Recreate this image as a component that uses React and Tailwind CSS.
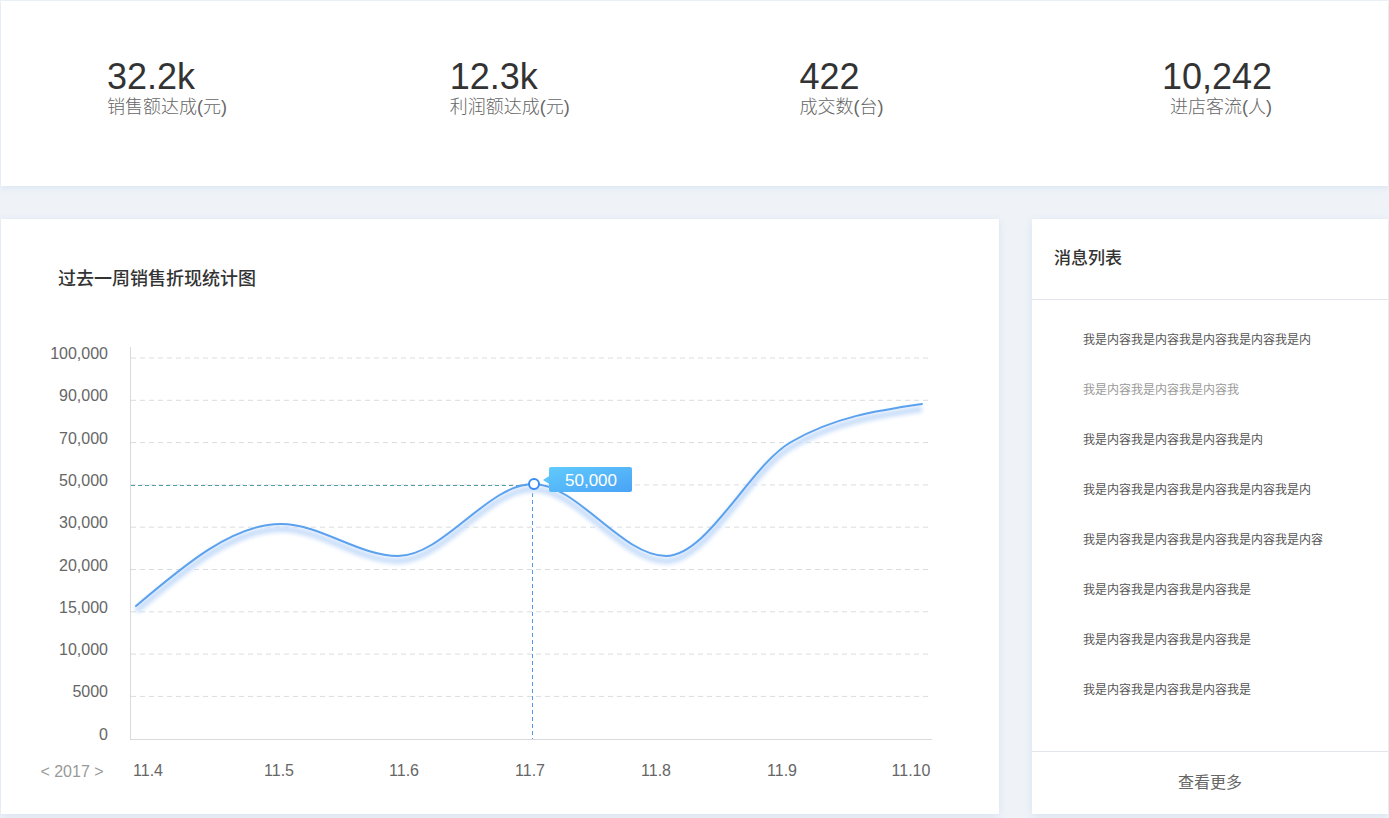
const stats = [
  { value: '32.2k', label: '销售额达成(元)', cls: 'pl-[106px]' },
  { value: '12.3k', label: '利润额达成(元)', cls: 'pl-[102px]' },
  { value: '422', label: '成交数(台)', cls: 'pl-[105px]' },
  { value: '10,242', label: '进店客流(人)', cls: 'pr-[116px] text-right items-end' },
];

const yLabels = ['100,000', '90,000', '70,000', '50,000', '30,000', '20,000', '15,000', '10,000', '5000', '0'];
const xLabels = [
  { t: '11.4', x: 147 },
  { t: '11.5', x: 278 },
  { t: '11.6', x: 403 },
  { t: '11.7', x: 529 },
  { t: '11.8', x: 655 },
  { t: '11.9', x: 781 },
  { t: '11.10', x: 910 },
];

const points = [
  [135, 306],
  [280, 224],
  [397, 256],
  [532, 184],
  [665, 256],
  [790, 142],
  [921, 104],
];

const messages = [
  { t: '我是内容我是内容我是内容我是内容我是内', muted: false },
  { t: '我是内容我是内容我是内容我', muted: true },
  { t: '我是内容我是内容我是内容我是内', muted: false },
  { t: '我是内容我是内容我是内容我是内容我是内', muted: false },
  { t: '我是内容我是内容我是内容我是内容我是内容', muted: false },
  { t: '我是内容我是内容我是内容我是', muted: false },
  { t: '我是内容我是内容我是内容我是', muted: false },
  { t: '我是内容我是内容我是内容我是', muted: false },
];

// monotone-x smoothing, same idea as d3.curveMonotoneX
function monotonePath(pts) {
  const n = pts.length;
  const sign = (v) => (v < 0 ? -1 : 1);
  const m = new Array(n).fill(0);
  for (let i = 1; i < n - 1; i++) {
    const h0 = pts[i][0] - pts[i - 1][0];
    const h1 = pts[i + 1][0] - pts[i][0];
    const s0 = (pts[i][1] - pts[i - 1][1]) / h0;
    const s1 = (pts[i + 1][1] - pts[i][1]) / h1;
    const p = (s0 * h1 + s1 * h0) / (h0 + h1);
    m[i] = (sign(s0) + sign(s1)) * Math.min(Math.abs(s0), Math.abs(s1), 0.5 * Math.abs(p)) || 0;
  }
  const h = pts[1][0] - pts[0][0];
  m[0] = (3 * (pts[1][1] - pts[0][1]) / h - m[1]) / 2;
  const hl = pts[n - 1][0] - pts[n - 2][0];
  m[n - 1] = (3 * (pts[n - 1][1] - pts[n - 2][1]) / hl - m[n - 2]) / 2;
  let d = `M${pts[0][0]},${pts[0][1]}`;
  for (let i = 0; i < n - 1; i++) {
    const [x0, y0] = pts[i];
    const [x1, y1] = pts[i + 1];
    const dx = (x1 - x0) / 3;
    d += ` C${x0 + dx},${y0 + dx * m[i]} ${x1 - dx},${y1 - dx * m[i + 1]} ${x1},${y1}`;
  }
  return d;
}

function SalesChart() {
  const linePath = monotonePath(points);
  return (
    <svg width="998" height="514" viewBox="0 0 998 514" className="block">
      <defs>
        <filter id="glow" x="-10%" y="-30%" width="120%" height="160%">
          <feGaussianBlur stdDeviation="2.2" />
        </filter>
        <linearGradient id="tip" x1="0" y1="0" x2="1" y2="1">
          <stop offset="0" stopColor="#60cafc" />
          <stop offset="1" stopColor="#4aa3f6" />
        </linearGradient>
      </defs>

      {yLabels.map((label, i) => {
        const y = 58 + i * 42.3;
        return (
          <g key={label}>
            {i < yLabels.length - 1 && (
              <line x1="130" x2="929" y1={y} y2={y} stroke="#d9dcdf" strokeWidth="1" strokeDasharray="5 4" />
            )}
            <text x="107" y={y - 4.5} textAnchor="end" dominantBaseline="central" fontSize="16" fill="#666">
              {label}
            </text>
          </g>
        );
      })}

      <line x1="129.5" x2="129.5" y1="47" y2="439" stroke="#d8dadd" strokeWidth="1" />
      <line x1="129" x2="931" y1="439.5" y2="439.5" stroke="#d8dadd" strokeWidth="1" />

      {xLabels.map((l) => (
        <text key={l.t} x={l.x} y="470" textAnchor="middle" dominantBaseline="central" fontSize="16" fill="#666">
          {l.t}
        </text>
      ))}
      <text x="71" y="471" textAnchor="middle" dominantBaseline="central" fontSize="16" fill="#999">
        {'< 2017 >'}
      </text>

      <line x1="130" x2="532" y1="185.5" y2="185.5" stroke="#4f9fa6" strokeWidth="1" strokeDasharray="4 3" />
      <line x1="531.5" x2="531.5" y1="186" y2="439" stroke="#4d9af0" strokeWidth="1" strokeDasharray="4 3" />

      <path d={linePath} transform="translate(0 5)" fill="none" stroke="#c7ddfa" strokeWidth="6" filter="url(#glow)" />
      <path d={linePath} fill="none" stroke="#5ba1ee" strokeWidth="2" strokeLinecap="round" />

      <circle cx="533" cy="184" r="5" fill="#fff" stroke="#3a8cf0" strokeWidth="2" />

      <polygon points="542,180 549,175.5 549,184.5" fill="#5ac4fb" />
      <rect x="548" y="167" width="83" height="25" rx="2" fill="url(#tip)" />
      <text x="590" y="180" textAnchor="middle" dominantBaseline="central" fontSize="17" fill="#fff">
        50,000
      </text>
    </svg>
  );
}

export default function App() {
  return (
    <div
      className="flex min-h-screen w-[1389px] flex-col gap-[33px] bg-[#eff3f8] p-px"
      style={{ fontFamily: "'Liberation Sans', 'Noto Sans CJK SC', sans-serif" }}
    >
      <div className="grid h-[185px] grid-cols-4 bg-white shadow-[0_2px_6px_rgba(200,215,235,0.5)]">
        {stats.map((s) => (
          <div key={s.label} className={`flex flex-col pt-[58px] ${s.cls}`}>
            <div className="text-[36px] leading-[36px] text-[#333]">{s.value}</div>
            <div className="text-[18px] font-light leading-[24px] text-[#666]">{s.label}</div>
          </div>
        ))}
      </div>

      <div className="flex gap-[33px]">
        <div className="h-[595px] w-[998px] bg-white shadow-[0_2px_8px_rgba(200,215,235,0.6)]">
          <div className="h-[81px] pl-[57px] pt-[47px]">
            <h3 className="text-[18px] font-medium leading-[26px] text-[#333]">过去一周销售折现统计图</h3>
          </div>
          <SalesChart />
        </div>

        <div className="flex h-[595px] flex-1 flex-col bg-white shadow-[0_2px_8px_rgba(200,215,235,0.6)]">
          <div className="flex h-[81px] items-start border-b border-[#e2e5e9] pl-[22px] pt-[28px]">
            <h3 className="text-[17px] font-medium leading-[24px] text-[#333]">消息列表</h3>
          </div>
          <ul className="flex flex-1 flex-col pl-[51px] pt-[15px]">
            {messages.map((m, i) => (
              <li
                key={i}
                className={`flex h-[50px] items-center text-[12px] ${m.muted ? 'text-[#999]' : 'text-[#555]'}`}
              >
                {m.t}
              </li>
            ))}
          </ul>
          <div className="flex h-[63px] items-center justify-center border-t border-[#e2e5e9] text-[16px] text-[#666]">
            查看更多
          </div>
        </div>
      </div>
    </div>
  );
}
